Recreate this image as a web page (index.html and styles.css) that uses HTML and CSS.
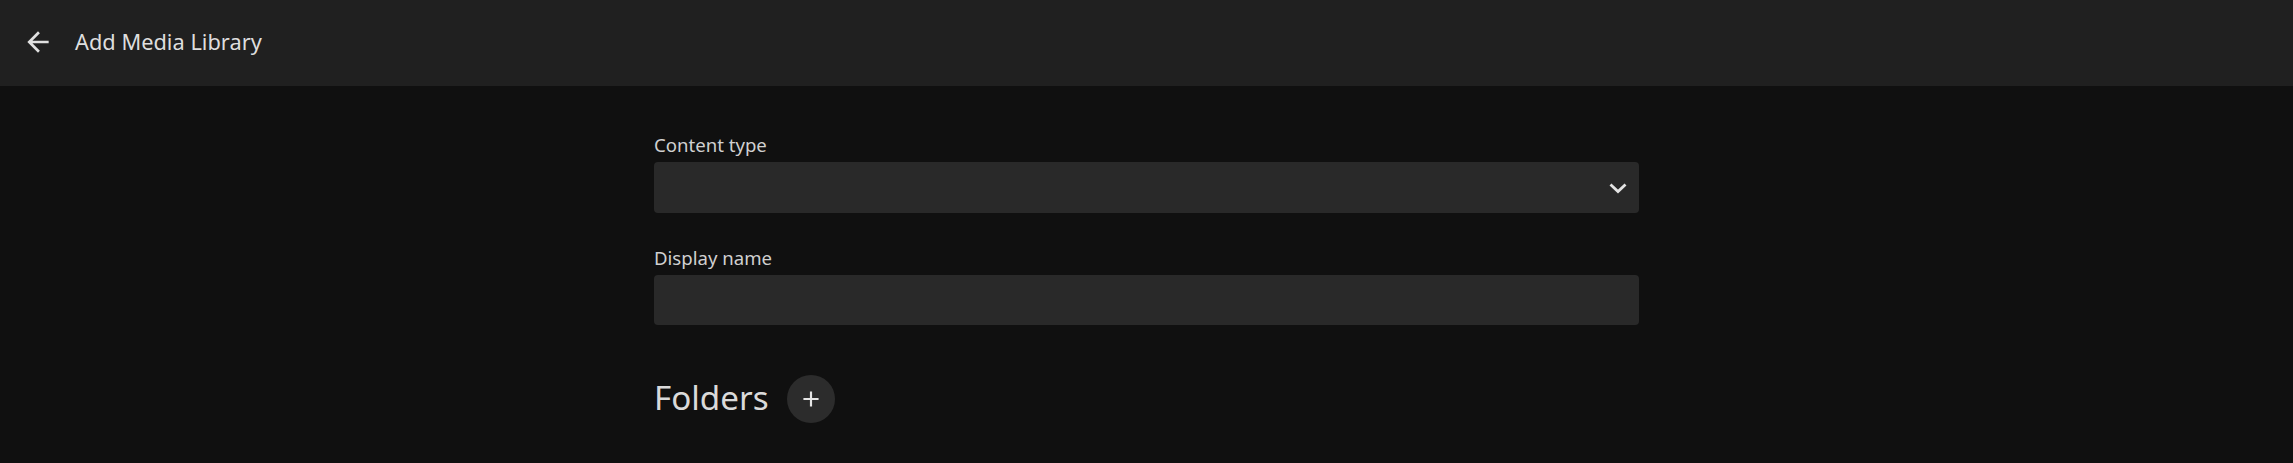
FILE: index.html
```html
<!DOCTYPE html>
<html lang="en">
<head>
    <meta charset="UTF-8">
    <meta name="viewport" content="width=device-width, initial-scale=1.0">
    <title>Add Media Library</title>
    <link rel="stylesheet" href="styles.css">
</head>
<body>
    <header class="topbar">
        <button class="back-btn" title="Back">
            <svg viewBox="0 0 24 24" width="32" height="32">
                <path d="M20 11H7.83l5.59-5.59L12 4l-8 8 8 8 1.41-1.41L7.83 13H20v-2z" fill="currentColor"/>
            </svg>
        </button>
        <h1 class="page-title">Add Media Library</h1>
    </header>

    <main class="content">
        <div class="form-group">
            <label for="contentType">Content type</label>
            <div class="select-wrap">
                <select id="contentType"></select>
                <svg class="chevron" viewBox="0 0 18 11" width="18" height="11">
                    <polyline points="1.5,1.5 9,8.5 16.5,1.5" fill="none" stroke="currentColor" stroke-width="2.8"/>
                </svg>
            </div>
        </div>

        <div class="form-group">
            <label for="displayName">Display name</label>
            <input type="text" id="displayName">
        </div>

        <div class="section-head">
            <h2>Folders</h2>
            <button class="add-btn" title="Add">
                <svg viewBox="0 0 24 24" width="26" height="26">
                    <path d="M19 13h-6v6h-2v-6H5v-2h6V5h2v6h6v2z" fill="currentColor"/>
                </svg>
            </button>
        </div>
    </main>
</body>
</html>
```

FILE: styles.css
```css
body {
    margin: 0;
    background-color: #101010;
    color: #d6d6d6;
    font-family: "Noto Sans", "Open Sans", sans-serif;
}
.topbar {
    height: 86px;
    background-color: #202020;
    display: flex;
    align-items: center;
    padding-left: 22px;
    box-sizing: border-box;
}
.back-btn {
    background: none;
    border: none;
    color: #e0e0e0;
    padding: 0;
    width: 32px;
    height: 32px;
    display: flex;
    align-items: center;
    justify-content: center;
    margin-top: -2px;
    cursor: pointer;
}
.page-title {
    margin: -4px 0 0 21px;
    font-size: 21.8px;
    font-weight: 400;
    color: #dedede;
}
.content {
    width: 985px;
    margin: 0 auto;
    padding-top: 46px;
}
.form-group {
    margin-bottom: 32px;
}
label {
    display: block;
    font-size: 18.6px;
    line-height: 26px;
    margin-bottom: 4px;
    color: #d0d0d0;
}
.select-wrap {
    position: relative;
}
select,
input[type="text"] {
    display: block;
    width: 100%;
    height: 51px;
    box-sizing: border-box;
    border: none;
    border-radius: 4px;
    background-color: #292929;
    color: #ddd;
    font-family: inherit;
    font-size: 19px;
    padding: 0 16px;
    appearance: none;
    outline: none;
}
input[type="text"] {
    height: 50px;
}
.chevron {
    position: absolute;
    right: 12px;
    top: 21px;
    color: #e4e4e4;
    pointer-events: none;
}
.section-head {
    display: flex;
    align-items: center;
    margin-top: 47px;
}
.section-head h2 {
    margin: 0;
    font-size: 33.2px;
    font-weight: 400;
    color: #dadada;
}
.add-btn {
    width: 48px;
    height: 48px;
    margin-left: 18px;
    margin-top: 3px;
    border-radius: 50%;
    border: none;
    background-color: #2c2c2c;
    color: #e6e6e6;
    display: flex;
    align-items: center;
    justify-content: center;
    padding: 0;
    cursor: pointer;
}
```
